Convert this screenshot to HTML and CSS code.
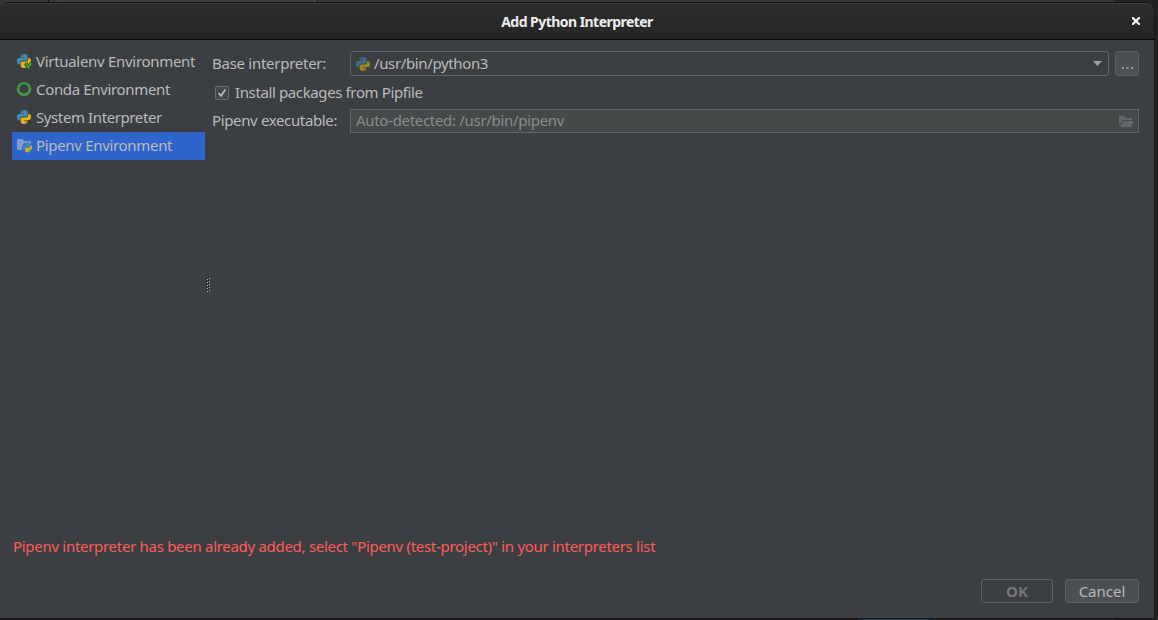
FILE: index.html
```
<!DOCTYPE html>
<html lang="en">
<head>
<meta charset="utf-8">
<title>Add Python Interpreter</title>
<link rel="stylesheet" href="styles.css">
</head>
<body>
<svg class="defs" width="0" height="0">
  <symbol id="python" viewBox="0 0 16 16">
    <path fill="#3f8fb9" d="M8 1C5.5 1 4.7 2 4.7 3V4.5H8.4V5H3.2C1.8 5 1 6.3 1 8.1C1 10 1.8 11.4 3.2 11.4H4.3V9.8C4.3 8.3 5.2 7.6 6.6 7.6H9.8C10.9 7.6 11.5 6.9 11.5 5.9V3C11.5 1.7 10.4 1 8 1Z"/>
    <path fill="#e1b512" d="M8.1 15C10.6 15 11.4 14.1 11.4 13V11.6H8V11.1H12.8C14.2 11.1 15 9.8 15 8C15 6.1 14.2 4.9 12.8 4.9H12.2V6.2C12.2 7.7 11.2 8.4 9.9 8.4H6.5C5.4 8.4 4.8 9.1 4.8 10.1V13C4.8 14.3 6 15 8.1 15Z"/>
    <circle cx="6.4" cy="2.8" r=".65" fill="#3c3f41"/>
    <circle cx="9.7" cy="13.2" r=".65" fill="#3c3f41"/>
  </symbol>
</svg>
<div class="dialog">
  <header class="titlebar">
    <h1 class="title">Add Python Interpreter</h1>
    <svg class="close" width="8" height="8" viewBox="0 0 8 8"><path d="M1 1L7 7M7 1L1 7" stroke="#f2f2f2" stroke-width="2.3" stroke-linecap="square"/></svg>
  </header>
  <main class="content">
    <nav class="sidebar">
      <div class="item"><svg class="icon" viewBox="0 0 16 16"><use href="#python"/><path d="M9.8 9.8L12.4 14.3L15.2 9.8" fill="none" stroke="#3c3f41" stroke-width="3.4"/><path d="M10 10L12.5 14.3L15 10" fill="none" stroke="#35a51b" stroke-width="2"/></svg><span class="t-virtualenv">Virtualenv Environment</span></div>
      <div class="item"><svg class="icon" viewBox="0 0 16 16"><circle cx="8" cy="8" r="5.9" fill="none" stroke="#43a047" stroke-width="2.4"/></svg><span class="t-conda">Conda Environment</span></div>
      <div class="item"><svg class="icon" viewBox="0 0 16 16"><use href="#python"/></svg><span class="t-system">System Interpreter</span></div>
      <div class="item selected"><svg class="icon" viewBox="0 0 16 16"><path fill="#809bc7" d="M1 2H6.5L8 4H15V7L6 9V13H1Z"/><circle cx="11.3" cy="10.7" r="5.1" fill="#2f65ca"/><svg x="6" y="5" width="11" height="11" viewBox="0 0 16 16"><use href="#python"/></svg></svg><span class="t-pipenv">Pipenv Environment</span></div>
    </nav>
    <div class="splitter"><svg width="4" height="15" viewBox="0 0 4 15"><path d="M.5 1V15M2.5 0V14" stroke="#15181a" stroke-dasharray="1 2"/><path d="M1.5 2V15M3.5 1V14" stroke="#b8babb" stroke-dasharray="1 2"/></svg></div>
    <section class="form">
      <div class="row">
        <label class="label t-base">Base interpreter:</label>
        <div class="combo"><svg class="icon dim" viewBox="0 0 16 16"><use href="#python"/></svg><span class="t-path">/usr/bin/python3</span><svg class="arrow" width="9" height="5" viewBox="0 0 9 5"><path d="M0 0H9L4.5 5Z" fill="#9da2a6"/></svg></div>
        <button class="browse"><svg width="11" height="2" viewBox="0 0 11 2"><path d="M0 0H2V2H0ZM4.5 0H6.5V2H4.5ZM9 0H11V2H9Z" fill="#929da5"/></svg></button>
      </div>
      <div class="row check-row">
        <svg class="checkbox" width="14" height="14" viewBox="0 0 14 14"><rect x=".5" y=".5" width="13" height="13" rx="1.5" fill="#43494a" stroke="#6b6b6b"/><path d="M3.5 7L6 9.8L10.5 3.5" fill="none" stroke="#b8babb" stroke-width="1.8"/></svg><span class="t-install">Install packages from Pipfile</span>
      </div>
      <div class="row exec-row">
        <label class="label t-exec">Pipenv executable:</label>
        <div class="field"><span class="t-auto">Auto-detected: /usr/bin/pipenv</span><svg class="folder" width="15" height="11" viewBox="0 0 15 11"><path fill="#60686d" d="M0 0H5L6.5 2H13V4H3.5L0 10ZM4 5H15L12 11H.8Z"/></svg></div>
      </div>
    </section>
  </main>
  <p class="error"><span class="t-error">Pipenv interpreter has been already added, select "Pipenv (test-project)" in your interpreters list</span></p>
  <footer class="actions">
    <button class="button ok" disabled>OK</button>
    <button class="button cancel"><span class="t-cancel">Cancel</span></button>
  </footer>
</div>
</body>
</html>
```
FILE: styles.css
```
* { box-sizing: border-box; }
body {
  margin: 0;
  width: 1158px;
  height: 620px;
  overflow: hidden;
  padding-top: 2px;
  background:
    linear-gradient(90deg, #30363a 0 48px, #151515 48px 49px, #30363a 49px 57px, #555a5c 57px 58px, #3a403f 58px 314px, #555a5c 314px 315px, #30363a 315px 1115px, #242221 1115px) top / 100% 6px no-repeat,
    linear-gradient(90deg, #242221 0 858px, #203a52 858px 930px, #2c2c2c 930px 1115px, #242221 1115px) bottom / 100% 1px no-repeat,
    #242221;
  font: 15px/20px "Noto Sans", sans-serif;
  color: #bbb;
}
.defs { display: block; }
.dialog {
  display: flex;
  flex-direction: column;
  width: 1155px;
  height: 617px;
  background: #3c3f41;
  border-right: 1px solid #161616;
  border-bottom: 1px solid #141414;
  border-radius: 8px 8px 0 0;
  overflow: hidden;
}
.titlebar {
  display: flex;
  align-items: center;
  height: 38px;
  padding-right: 14px;
  flex: none;
  background: linear-gradient(#2d2d2d, #252525);
  border-top: 1px solid #151515;
  border-bottom: 1px solid #080808;
  box-shadow: inset 0 1px #3b3b3b;
  border-radius: 8px 8px 0 0;
}
.title { margin: 0; flex: 1; padding: 1px 0 0 22px; text-align: center; font-size: 14px; line-height: 20px; font-weight: 700; color: #eee; letter-spacing: -.54px; }
.close { display: block; }
.content { display: flex; height: 487px; flex: none; padding-top: 8px; padding-left: 12px; }
.sidebar { width: 193px; }
.item { display: flex; align-items: center; height: 28px; padding: 0 0 2px 4px; gap: 4px; }
.item span, .row span, .label, .error span { white-space: nowrap; }
.selected { background: #2f65ca; }
.icon { width: 16px; height: 16px; flex: none; display: block; }
.dim { opacity: .6; }
.splitter { width: 7px; padding: 228px 0 0 1px; }
.form { width: 927px; padding-top: 3px; display: flex; flex-direction: column; }
.row { display: flex; align-items: center; height: 25px; }
.label { width: 138px; flex: none; padding-bottom: 2px; }
.combo { display: flex; align-items: center; width: 759px; height: 25px; padding: 0 6px 0 4px; border: 1px solid #646464; border-radius: 3px; gap: 3px; }
.combo span, .check-row span, .field span { padding-bottom: 2px; }
.arrow { margin-left: auto; }
.browse { display: flex; justify-content: center; align-items: flex-end; width: 24px; height: 25px; margin-left: 6px; padding: 0 0 6px; background: #4c5052; border: 1px solid #5e6060; border-radius: 3px; }
.check-row { height: 33px; gap: 6px; padding-left: 3px; }
.exec-row { height: 24px; }
.field { display: flex; align-items: center; justify-content: space-between; width: 789px; height: 24px; padding: 0 4px 0 5px; border: 1px solid #646464; background: #45494a; color: #8b8d8d; }
.error { margin: 0; height: 36px; flex: none; padding: 9px 0 0 13px; color: #ff5c5c; }
.actions { display: flex; justify-content: flex-end; gap: 12px; padding: 16px 15px 0 0; }
.button { height: 24px; padding: 0; border: 1px solid #5e6060; border-radius: 3px; background: #4c5052; color: #bbb; font: 15px/20px "Noto Sans", sans-serif; }
.ok { width: 72px; background: transparent; color: #777; font-weight: 700; }
.cancel { width: 74px; }
.t-virtualenv { letter-spacing: -.3px; }
.t-conda { letter-spacing: -.34px; }
.t-system { letter-spacing: -.4px; }
.t-pipenv { letter-spacing: -.32px; }
.t-base { letter-spacing: -.27px; }
.t-path { letter-spacing: -.37px; }
.t-install { letter-spacing: -.38px; }
.t-exec { letter-spacing: -.36px; }
.t-auto { letter-spacing: -.31px; }
.t-error { letter-spacing: -.295px; }
```
